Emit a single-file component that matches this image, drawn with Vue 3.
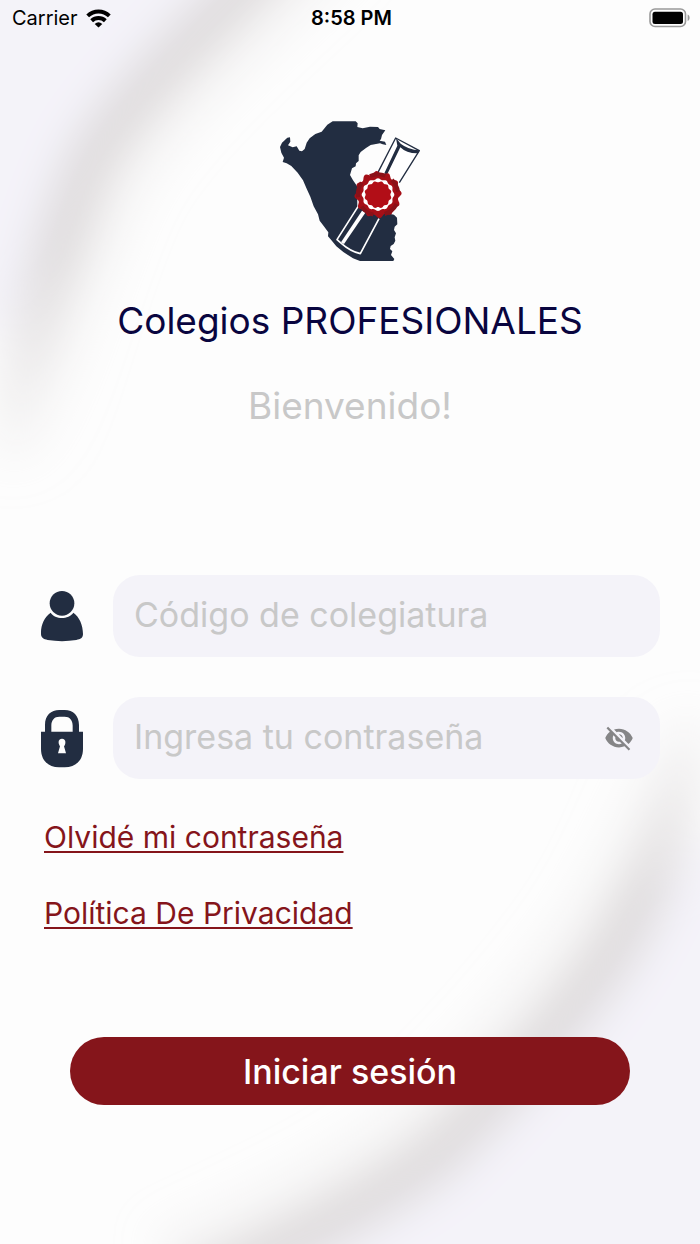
<!-- LoginView.vue -->

<script setup>
import { ref } from 'vue'

const codigo = ref('')
const password = ref('')
const showPassword = ref(false)

// Contorno ondulado del sello: doce ondas alrededor del centro (324, 254)
function rosette(radius, wave, phase) {
  const points = []
  for (let deg = 0; deg < 360; deg += 3) {
    const a = (deg * Math.PI) / 180
    const r = radius + wave * Math.cos(12 * a + phase)
    points.push(`${(324 + r * Math.cos(a)).toFixed(1)} ${(254 + r * Math.sin(a)).toFixed(1)}`)
  }
  return `M${points.join('L')}Z`
}

const sealEdge = rosette(66, 5, 0.8)
const sealRing = rosette(47, 2, 0)
const sealCenter = rosette(39, 2, Math.PI)

function togglePassword() {
  showPassword.value = !showPassword.value
}

function handleLogin() {
  if (!codigo.value || !password.value) return
  password.value = ''
}
</script>

<template>
  <div class="login">
    <!-- Fondo con las dos curvas difuminadas -->
    <svg class="background" viewBox="0 0 700 1244" preserveAspectRatio="none" aria-hidden="true">
      <defs>
        <filter id="soft" filterUnits="userSpaceOnUse" x="-200" y="-200" width="1100" height="1644">
          <feGaussianBlur stdDeviation="20" />
        </filter>
        <linearGradient id="fadeTop" gradientUnits="userSpaceOnUse" x1="0" y1="250" x2="0" y2="480">
          <stop offset="0" stop-color="#dfdcdd" />
          <stop offset="1" stop-color="#dfdcdd" stop-opacity="0" />
        </linearGradient>
        <linearGradient id="fadeBottom" gradientUnits="userSpaceOnUse" x1="0" y1="700" x2="0" y2="900">
          <stop offset="0" stop-color="#dfdcdd" stop-opacity="0" />
          <stop offset="1" stop-color="#dfdcdd" />
        </linearGradient>
      </defs>
      <g filter="url(#soft)">
        <path fill="#f4f3f9" d="M-100-100H300C213 7 140 80 90 157C60 220 45 280 5 330L-100 350Z" />
        <g fill="none" stroke="url(#fadeTop)">
          <path stroke-width="50" d="M300-70C250-15 140 80 93 157C65 215 45 290 18 400L5 500" />
          <path stroke-width="60" stroke-opacity="0.200" d="M350-60C270 20 175 95 125 177C95 235 75 310 48 420L30 500" />
        </g>
        <path fill="#f4f3f9" d="M800 840H700C675 890 635 920 610 963C565 1020 500 1095 433 1160C375 1200 300 1240 210 1290V1400H800Z" />
        <g fill="none" stroke="url(#fadeBottom)">
          <path stroke-width="50" d="M695 690C680 820 640 910 608 958C565 1020 500 1095 433 1158C375 1200 300 1240 190 1290" />
          <path stroke-width="60" stroke-opacity="0.200" d="M670 680C650 800 610 890 578 935C535 995 470 1070 403 1130C345 1175 270 1210 160 1260" />
        </g>
      </g>
    </svg>

    <!-- Barra de estado -->
    <header class="status-bar">
      <div class="carrier">
        <span>Carrier</span>
        <svg width="25" height="19" viewBox="0 0 26 20" aria-hidden="true">
          <g fill="none" stroke="#000" stroke-width="4.200">
            <path d="M1.600 7.200A16.500 16.500 0 0 1 24.400 7.200" />
            <path d="M5.800 12.400A10.500 10.500 0 0 1 20.200 12.400" />
          </g>
          <path d="M13 19.500L9 15.700A6 6 0 0 1 17 15.700Z" />
        </svg>
      </div>
      <time class="time">8:58 PM</time>
      <div class="battery">
        <svg width="42" height="20" viewBox="0 0 42 20" aria-hidden="true">
          <rect x="1" y="1" width="35.500" height="17.500" rx="5" fill="none" stroke="#999" stroke-width="1.600" />
          <rect x="3.500" y="3.700" width="30.500" height="12.200" rx="2.500" />
          <path fill="#999" d="M38.600 6.500C41.300 7.600 41.300 12 38.600 13Z" />
        </svg>
      </div>
    </header>

    <main class="content">
      <!-- Logo: mapa, pergamino y sello -->
      <svg class="logo" viewBox="0 0 480 480" role="img" aria-label="Colegios PROFESIONALES">
        <path fill="#222d41" d="M188 34H257L263 40L262 51L278 55L300 50L324 51L329 57L346 61L336 75L333 87L329 92L345 95L349 105L338 103L330 100L302 105L288 114L272 126L266 136V153L258 160L257 169L246 175L240 195L249 211L261 228L262 290L372 314L381 323L382 343L374 350L372 360L378 370L374 382L376 392L371 402L362 408L360 417L367 424L363 435L373 447L370 453H270L249 445L220 426L199 409L183 389L174 379L175 367L161 348L149 332L144 313L131 289L121 260L110 236L99 211L83 188L64 168L50 160L38 156L42 143L34 128L30 111L36 98L52 83L60 82L61 95L54 106L68 112L80 109L88 122L96 124L104 117L110 98L119 85L136 72L155 65L172 44Z" />
        <path fill="#fff" d="M378 82L448 122L394 216L325 186Z" />
        <g fill="none" stroke="#222d41" stroke-width="4" stroke-linejoin="round">
          <path d="M324 187L377 84L448 122L388 218" />
        </g>
        <path fill="#222d41" d="M378 84L392 101Q415 119 448 121L444 130Q410 131 391 112L351 194L343 190L382 107Z" />
        <g fill="none" stroke="#fff" stroke-width="5" stroke-linejoin="round">
          <path d="M264 290L201 389L214 400Q241 424 271 431L327 326" />
        </g>
        <path fill="#fff" d="M276 302L286 308L222 402L213 397Z" />
        <path fill="#a50f17" :d="sealEdge" />
        <g fill="none" stroke="#8a1118" stroke-width="12">
          <path d="M300 198A61 61 0 0 1 346 197M366 210A61 61 0 0 1 384 245" />
          <path d="M380 282A61 61 0 0 1 344 312M310 314A61 61 0 0 1 275 290M264 262A61 61 0 0 1 275 218" />
        </g>
        <path fill="#fff" :d="sealRing" />
        <path fill="#b20e17" :d="sealCenter" />
      </svg>

      <h1 class="title">Colegios PROFESIONALES</h1>
      <p class="welcome">Bienvenido!</p>

      <form class="form" @submit.prevent="handleLogin">
        <!-- Código -->
        <div class="row">
          <label class="row-icon" for="codigo">
            <svg width="44" height="52" viewBox="30 75 132 156" role="img" aria-label="Código de colegiatura">
              <circle cx="96" cy="115" r="37" fill="#222d41" />
              <path fill="#222d41" d="M62 143C75 164 116 164 130 143C148 155 159 180 159 207C159 219 151 222 139 225Q96 232 53 225C41 222 33 218 33 207C32 180 43 157 62 143Z" />
            </svg>
          </label>
          <div class="field">
            <input id="codigo" v-model="codigo" type="text" placeholder="Código de colegiatura" />
          </div>
        </div>

        <!-- Contraseña -->
        <div class="row">
          <label class="row-icon" for="password">
            <svg width="44" height="59" viewBox="30 430 132 177" role="img" aria-label="Contraseña">
              <path fill="#222d41" fill-rule="evenodd" d="M45 498V478C45 449 63 433 88 433H104C130 433 147 450 147 478V498H159V549C159 585 136 605 104 605H87C56 605 33 585 33 549V498ZM64 498H128V480C128 463 119 453 104 453H88C73 453 64 463 64 480ZM96 519C89 519 85 524 86 531C86 536 89 539 90 542L84 563H108L102 542C104 539 106 536 106 531C107 524 103 519 96 519Z" />
            </svg>
          </label>
          <div class="field">
            <input
              id="password"
              v-model="password"
              :type="showPassword ? 'text' : 'password'"
              placeholder="Ingresa tu contraseña"
            />
            <button class="toggle" type="button" aria-label="Mostrar contraseña" @click="togglePassword">
              <svg width="30" height="30" viewBox="0 0 24 24" aria-hidden="true">
                <path fill="#858587" d="M12 7c2.760 0 5 2.240 5 5 0 .65-.13 1.260-.36 1.830l2.920 2.920c1.510-1.260 2.700-2.890 3.430-4.750-1.730-4.390-6-7.500-11-7.500-1.400 0-2.740.25-3.980.7l2.160 2.160C10.740 7.130 11.350 7 12 7zM2 4.270l2.280 2.280.46.46C3.080 8.300 1.780 10.020 1 12c1.730 4.390 6 7.500 11 7.500 1.550 0 3.030-.3 4.380-.84l.42.42L19.730 22 21 20.730 3.270 3 2 4.270zM7.530 9.800l1.550 1.550c-.05.21-.08.43-.08.65 0 1.660 1.340 3 3 3 .22 0 .44-.03.65-.08l1.550 1.550c-.67.33-1.410.53-2.200.53-2.760 0-5-2.240-5-5 0-.79.2-1.530.53-2.200zm4.310-.78l3.150 3.150.02-.16c0-1.660-1.340-3-3-3l-.17.01z" />
              </svg>
            </button>
          </div>
        </div>

        <nav class="links">
          <a href="#recuperar">Olvidé mi contraseña</a>
          <a href="#privacidad">Política De Privacidad</a>
        </nav>

        <button class="submit" type="submit">Iniciar sesión</button>
      </form>
    </main>
  </div>
</template>

<style>
body {
  margin: 0;
}
</style>

<style scoped>
.login {
  position: relative;
  min-height: 100vh;
  overflow: hidden;
  background: #fdfdfd;
  font-family: Inter, 'Liberation Sans', sans-serif;
}

/* Detrás de todo el contenido */
.background {
  position: absolute;
  inset: 0;
  width: 100%;
  height: 100%;
}

.status-bar {
  position: relative;
  display: grid;
  grid-template-columns: 1fr auto 1fr;
  align-items: center;
  height: 36px;
  padding: 0 9px 0 12px;
  font-size: 20px;
  line-height: 24px;
}

.carrier {
  display: flex;
  align-items: center;
  gap: 8px;
}

.time {
  font-weight: 600;
}

.battery {
  display: flex;
  justify-content: flex-end;
}

.content {
  position: relative;
  display: flex;
  flex-direction: column;
  align-items: center;
  padding: 74px 40px 40px;
}

.logo {
  width: 160px;
  height: 160px;
}

.title,
.welcome {
  margin: 0;
  font-size: 37px;
  font-weight: 400;
  line-height: 44px;
  text-align: center;
}

.title {
  margin-top: 29px;
  color: #09053f;
}

.welcome {
  margin-top: 41px;
  color: #c8c8c8;
}

.form {
  display: flex;
  flex-direction: column;
  gap: 40px;
  width: 100%;
  margin-top: 147px;
}

.row {
  display: flex;
  align-items: center;
  gap: 29px;
}

.row-icon {
  display: flex;
}

.field {
  display: flex;
  flex: 1;
  align-items: center;
  min-width: 0;
  height: 82px;
  padding: 0 26px 0 21px;
  border-radius: 27px;
  background: #f4f3f9;
  box-sizing: border-box;
}

.field input {
  flex: 1;
  min-width: 0;
  padding: 0 0 2px;
  border: none;
  outline: none;
  background: transparent;
  color: #222d41;
  font-family: inherit;
  font-size: 34px;
  line-height: 44px;
}

.field input::placeholder {
  color: #c8c8c8;
  opacity: 1;
}

.toggle {
  display: flex;
  padding: 0;
  border: none;
  background: none;
  cursor: pointer;
}

.links {
  display: flex;
  flex-direction: column;
  align-items: flex-start;
  gap: 40px;
  padding-left: 4px;
}

.links a {
  color: #85151b;
  font-size: 30px;
  line-height: 36px;
  text-decoration-thickness: 2px;
  text-underline-offset: 3px;
  text-decoration-skip-ink: none;
}

.submit {
  height: 68px;
  margin: 66px 30px 0;
  border: none;
  border-radius: 34px;
  background: #85151b;
  color: #fff;
  font-family: inherit;
  font-size: 34px;
  font-weight: 500;
  cursor: pointer;
}
</style>
